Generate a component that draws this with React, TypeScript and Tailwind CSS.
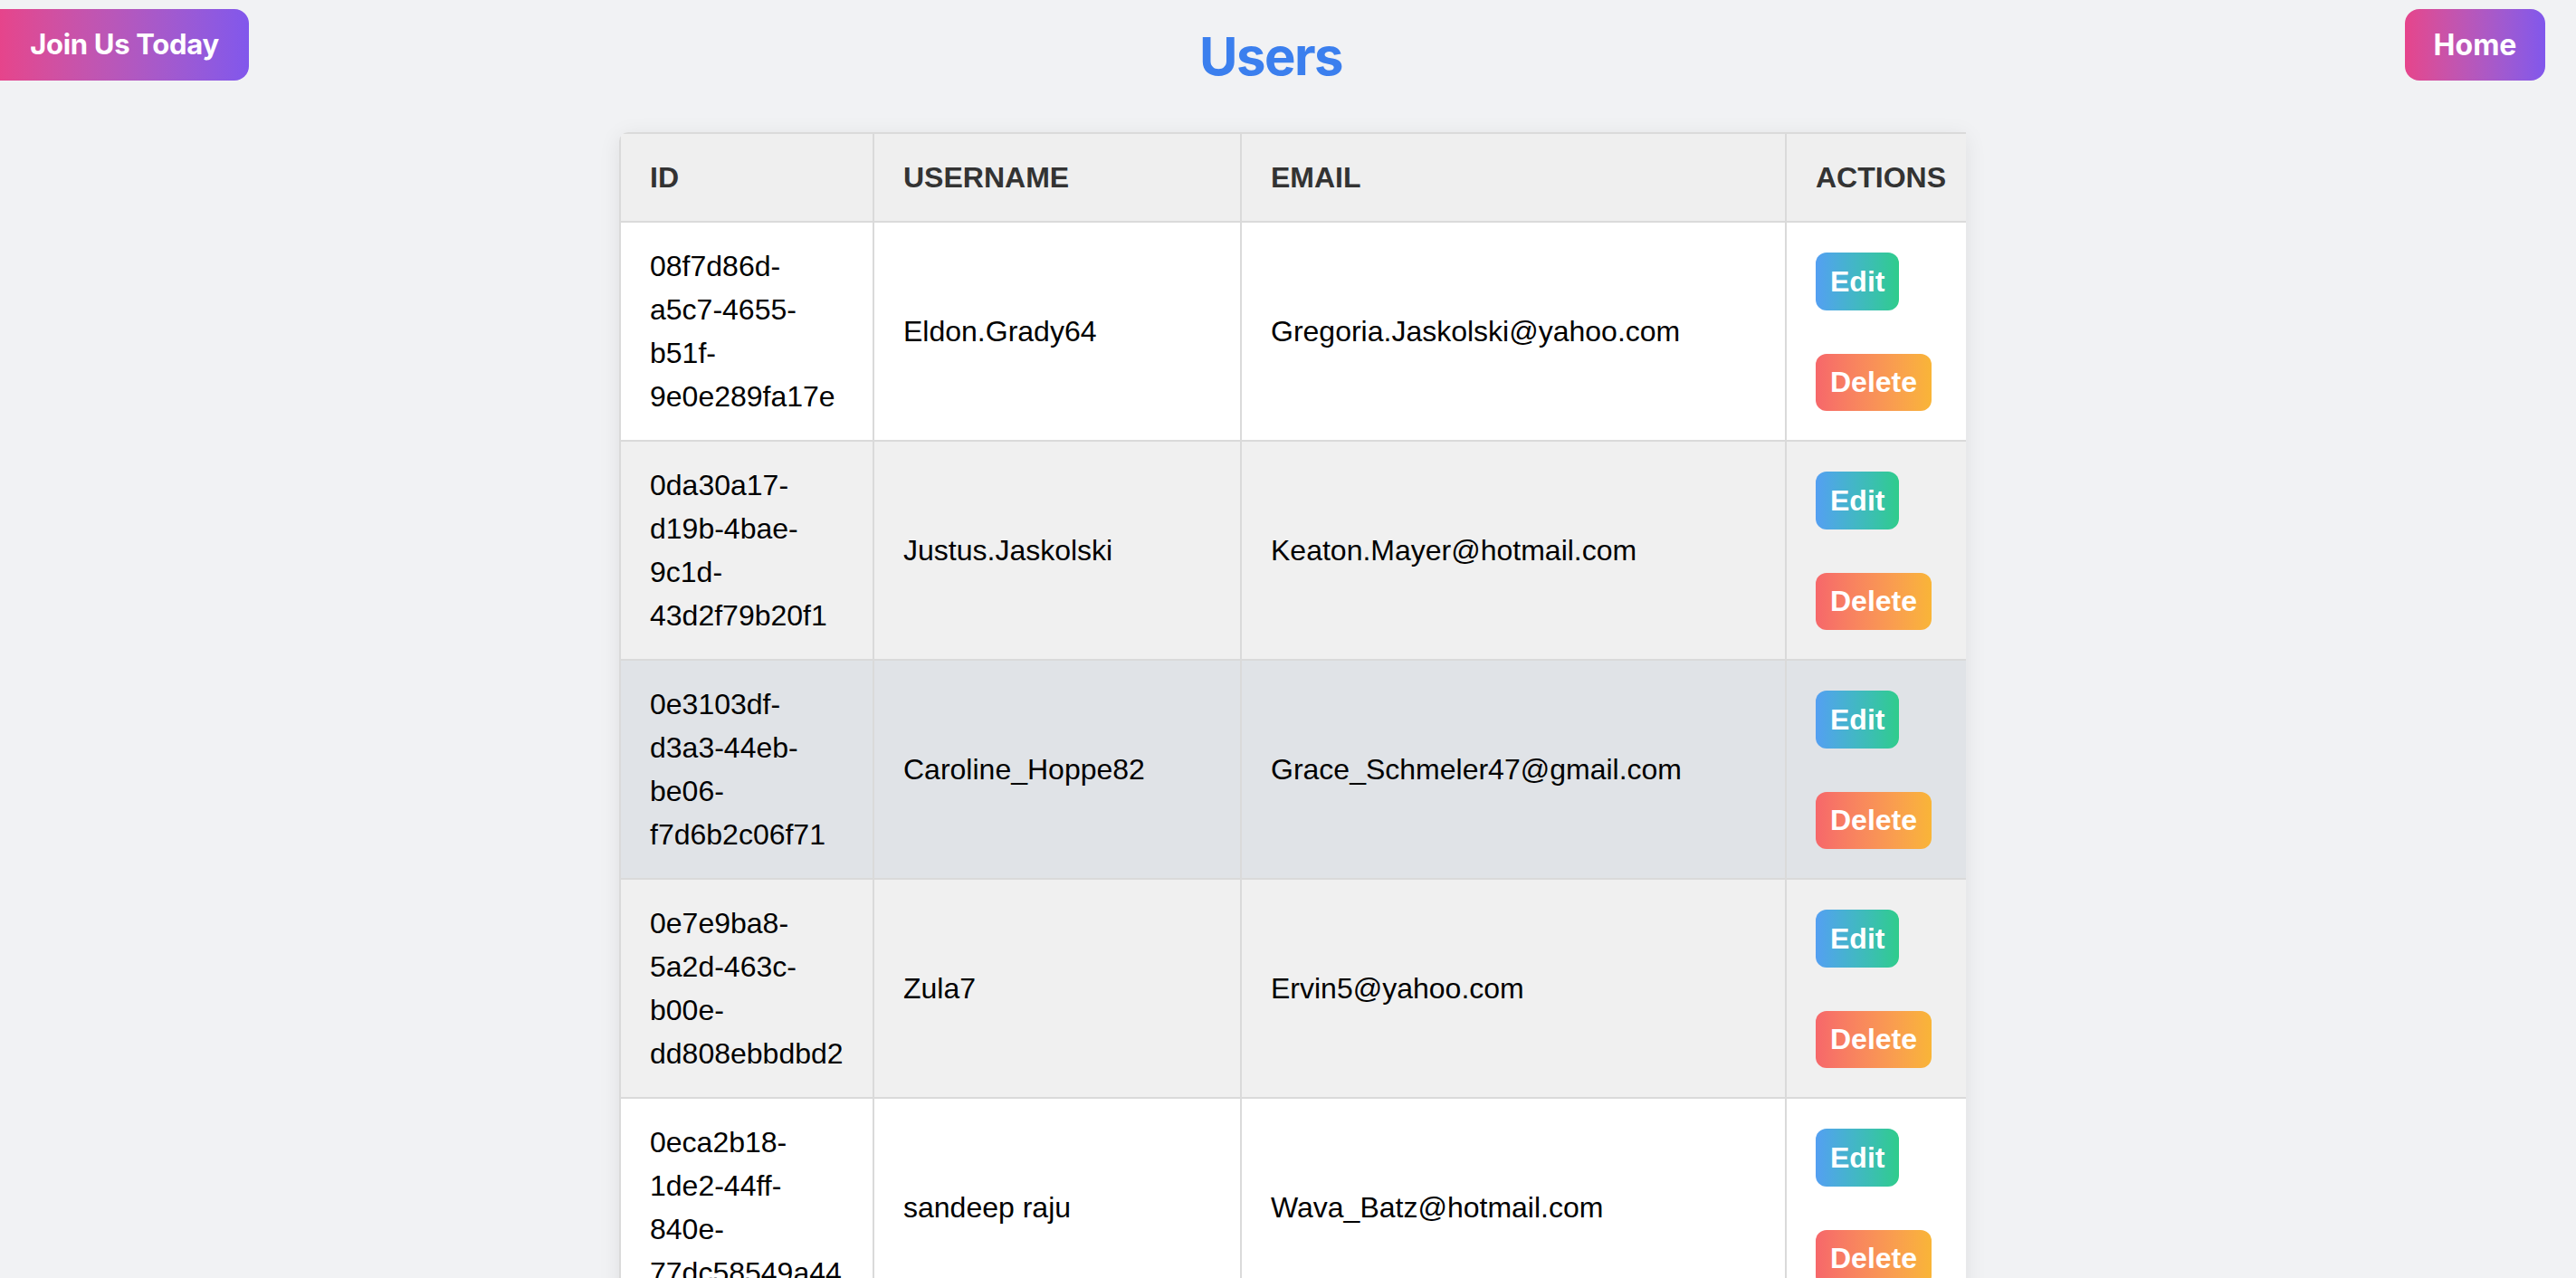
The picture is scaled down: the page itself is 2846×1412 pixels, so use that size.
import React from 'react'

type User = { id: string; username: string; email: string }

const users: User[] = [
  { id: '08f7d86d-a5c7-4655-b51f-9e0e289fa17e', username: 'Eldon.Grady64', email: 'Gregoria.Jaskolski@yahoo.com' },
  { id: '0da30a17-d19b-4bae-9c1d-43d2f79b20f1', username: 'Justus.Jaskolski', email: 'Keaton.Mayer@hotmail.com' },
  { id: '0e3103df-d3a3-44eb-be06-f7d6b2c06f71', username: 'Caroline_Hoppe82', email: 'Grace_Schmeler47@gmail.com' },
  { id: '0e7e9ba8-5a2d-463c-b00e-dd808ebbdbd2', username: 'Zula7', email: 'Ervin5@yahoo.com' },
  { id: '0eca2b18-1de2-44ff-840e-77dc58549a44', username: 'sandeep raju', email: 'Wava_Batz@hotmail.com' },
]

// row 3 is shown in its hover state
const rowBg = (i: number) => (i === 2 ? 'bg-[#e0e3e7]' : i % 2 === 1 ? 'bg-[#f0f0f0]' : 'bg-white')

export default function App() {
  return (
    <div className="min-h-screen bg-[#f1f2f4] overflow-hidden font-['Liberation_Sans',Arial,sans-serif]">
      <header className="flex items-start pr-[34px] font-['Inter',sans-serif]">
        <button className="mt-[10px] h-[79px] w-[275px] rounded-r-[16px] bg-gradient-to-r from-[#e6448b] to-[#8157ec] text-white text-[31px] font-bold tracking-[-0.3px]">
          Join Us Today
        </button>
        <div className="flex-1 flex justify-center pr-[124px]">
          <h1 className="mt-[26px] text-[58px] leading-[72px] font-bold tracking-[-1.5px] text-[#3b7fee]">Users</h1>
        </div>
        <button className="mt-[10px] h-[79px] w-[155px] rounded-[16px] bg-gradient-to-r from-[#e6448b] to-[#8157ec] text-white text-[32px] font-bold">
          Home
        </button>
      </header>

      <div className="ml-[684px] mt-[48px] w-[1488px] overflow-hidden rounded-tl-[10px] shadow-[0_4px_24px_rgba(0,0,0,0.08)]">
        <table className="table-fixed border-collapse w-[1498px] text-[32px] leading-[48px]">
          <thead>
            <tr className="bg-[#efefef] text-[#333]">
              <th className="w-[280px] border-2 border-[#dadada] px-8 py-6 text-left font-bold uppercase">ID</th>
              <th className="w-[406px] border-2 border-[#dadada] px-8 py-6 text-left font-bold uppercase">Username</th>
              <th className="w-[602px] border-2 border-[#dadada] px-8 py-6 text-left font-bold uppercase">Email</th>
              <th className="w-[210px] border-2 border-[#dadada] px-8 py-6 text-left font-bold uppercase">Actions</th>
            </tr>
          </thead>
          <tbody>
            {users.map((u, i) => (
              <tr key={u.id} className={`${rowBg(i)} text-black`}>
                <td className="border-2 border-[#dadada] px-8 py-6 align-middle">{u.id}</td>
                <td className="border-2 border-[#dadada] px-8 py-6 align-middle">{u.username}</td>
                <td className="border-2 border-[#dadada] px-8 py-6 align-middle">{u.email}</td>
                <td className="border-2 border-[#dadada] px-8 py-0 align-middle">
                  <div className="flex flex-col items-start gap-[48px]">
                    <button className="h-[64px] px-4 rounded-[12px] bg-gradient-to-r from-[#549ff2] to-[#2fcc8b] text-white font-bold leading-none">
                      Edit
                    </button>
                    <button className="h-[63px] px-4 rounded-[12px] bg-gradient-to-r from-[#f6676a] to-[#f9b537] text-white font-bold leading-none">
                      Delete
                    </button>
                  </div>
                </td>
              </tr>
            ))}
          </tbody>
        </table>
      </div>
    </div>
  )
}
